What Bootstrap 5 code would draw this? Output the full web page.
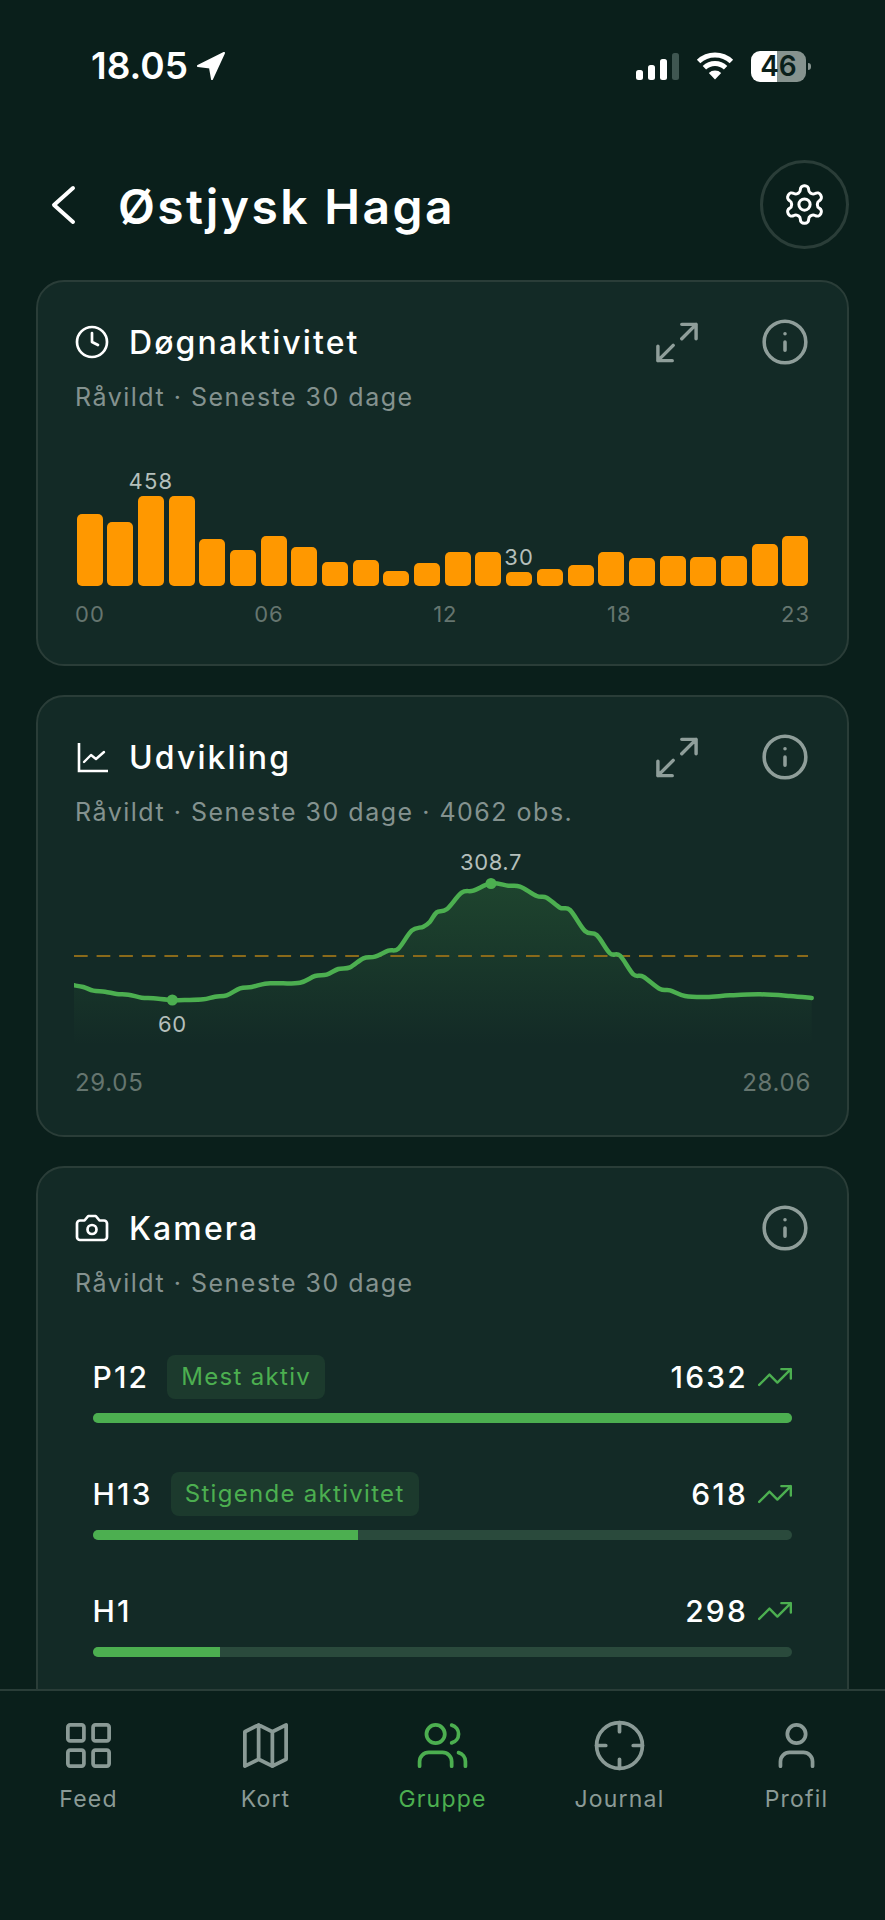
<!DOCTYPE html>
<html lang="da">

<head>
    <title>Østjysk Haga</title>
    <link href="https://cdn.jsdelivr.net/npm/bootstrap@5.3.0/dist/css/bootstrap.min.css" rel="stylesheet">
    <style>
        body {
            height: 1920px;
            overflow: hidden;
            background: #0a1f1b;
            color: #fff;
            font-family: "Inter", "Liberation Sans", sans-serif;
        }

        .status-bar {
            height: 132px;
            padding: 0 74px 0 91px;
        }

        .status-time {
            font-size: 37px;
            font-weight: 600;
        }

        .signal-bar {
            width: 7.5px;
            border-radius: 2.5px;
            background: #fff;
        }

        .battery-box {
            width: 55px;
            height: 31px;
            border-radius: 9px;
            background: linear-gradient(90deg, #fff 47%, #86938f 47%);
            color: #0a1f1b;
            font-size: 28px;
            font-weight: 600;
            line-height: 31px;
        }

        .battery-nub {
            width: 3px;
            height: 7px;
            margin-left: 2px;
            border-radius: 0 3px 3px 0;
            background: #86938f;
        }

        .page-head {
            height: 89px;
            margin-top: 28px;
            padding: 0 36px 0 50px;
        }

        .page-title {
            margin: 5px 0 0 42px;
            font-size: 48px;
            font-weight: 600;
            letter-spacing: 2.4px;
        }

        .round-btn {
            width: 89px;
            height: 89px;
            border: 3px solid #2a3d38;
            border-radius: 50%;
        }

        .page-main {
            height: 1689px;
            overflow: hidden;
        }

        .panel-card {
            margin: 31px 36px 0 36px;
            border: 2px solid #2a3d38;
            border-radius: 28px;
            background: #132a26;
            color: #fff;
        }

        .panel-card + .panel-card {
            margin-top: 29px;
        }

        .panel-body {
            padding: 35px 37px 36px 37px;
        }

        .panel-head {
            height: 50px;
        }

        .head-icon {
            margin-left: -1px;
            margin-right: 19px;
        }

        .panel-title {
            margin: 3px 0 0 0;
            font-size: 32px;
            font-weight: 500;
            letter-spacing: 2.1px;
        }

        .expand-icon {
            margin-right: 62px;
        }

        .panel-sub {
            margin-top: 14px;
            font-size: 25px;
            line-height: 32px;
            letter-spacing: 1.5px;
            color: #84928f;
        }

        .bars-wrap {
            height: 126px;
            margin-top: 47px;
            margin-left: 1.5px;
            gap: 4.67px;
            width: 732px;
        }

        .bar-col {
            flex: 1 1 0;
            min-width: 0;
        }

        .bar-fill {
            width: 100%;
            border-radius: 5px;
            background: #ff9800;
        }

        .bar-value {
            margin-bottom: 7px;
            font-size: 22px;
            line-height: 16px;
            letter-spacing: 1.2px;
            white-space: nowrap;
            color: #b4bfbb;
        }

        .axis-row {
            margin-top: 14px;
            font-size: 22px;
            line-height: 28px;
            letter-spacing: 1px;
            color: #65756f;
            width: 735px;
        }

        .line-wrap {
            display: block;
            margin: 12px 0 0 -1px;
        }

        .line-text {
            font-size: 22px;
            letter-spacing: 0.6px;
            fill: #b4bfbb;
            text-anchor: middle;
        }

        .date-row {
            margin-top: 8px;
            margin-right: -1px;
            margin-bottom: 1px;
            font-size: 24px;
            line-height: 30px;
            letter-spacing: 0.7px;
            color: #65756f;
        }

        .camera-list {
            margin: 56px 18px 0 17.5px;
            padding-bottom: 80px;
        }

        .camera-row {
            margin-bottom: 49px;
        }

        .camera-line {
            height: 44px;
        }

        .camera-name,
        .camera-count {
            font-size: 30px;
            font-weight: 500;
            letter-spacing: 2.2px;
        }

        .camera-tag {
            margin-left: 18px;
            padding: 0 14px;
            border-radius: 8px;
            background: #1c3a2d;
            color: #4caf50;
            font-size: 24px;
            line-height: 44px;
            letter-spacing: 1.3px;
        }

        .trend-icon {
            margin: 0 -2px 0 8px;
        }

        .camera-track {
            height: 10px;
            margin-top: 14px;
            border-radius: 5px;
            background: #2a4a3c;
        }

        .camera-track .progress-bar {
            background: #4caf50;
        }

        .tab-bar {
            height: 231px;
            border-top: 2px solid #2a3d38;
            padding-top: 26.5px;
            background: #0a1f1b;
        }

        .tab-item {
            flex: 1 1 0;
            color: #8a9a96;
        }

        .tab-item.on {
            color: #4caf50;
        }

        .tab-label {
            margin-top: 11.5px;
            font-size: 23px;
            line-height: 30px;
            letter-spacing: 1.2px;
        }
    </style>
</head>

<body>
    <div class="page-main">
        <!-- Status bar -->
        <div class="status-bar d-flex align-items-center justify-content-between">
            <div class="d-flex align-items-center gap-2">
                <span class="status-time">18.05</span>
                <svg width="30" height="30" viewBox="0 0 30 30">
                    <path d="M28 2 2 15l12 1.500L16 28z" fill="#fff" stroke="#fff" stroke-width="2" stroke-linejoin="round" />
                </svg>
            </div>
            <div class="d-flex align-items-center" style="gap:17px">
                <div class="d-flex align-items-end" style="gap:4.500px;height:27px">
                    <div class="signal-bar" style="height:10px"></div>
                    <div class="signal-bar" style="height:15px"></div>
                    <div class="signal-bar" style="height:21px"></div>
                    <div class="signal-bar" style="height:27px;background:#3f5651"></div>
                </div>
                <svg width="38" height="28" viewBox="0 0 38 28" fill="none" stroke="#fff" stroke-width="5">
                    <path d="M2.600 9.500a24 24 0 0 1 32.800 0" />
                    <path d="M8.400 15.700a15.500 15.500 0 0 1 21.200 0" />
                    <path d="M19 27.500 12.800 21a9 9 0 0 1 12.400 0z" fill="#fff" stroke="none" />
                </svg>
                <div class="d-flex align-items-center">
                    <div class="battery-box text-center">46</div>
                    <div class="battery-nub"></div>
                </div>
            </div>
        </div>

        <!-- Header -->
        <div class="page-head d-flex align-items-center">
            <svg width="26" height="40" viewBox="0 0 26 40" fill="none" stroke="#fff" stroke-width="4" stroke-linecap="round" stroke-linejoin="round">
                <path d="M23 3 4 20l19 17" />
            </svg>
            <h1 class="page-title flex-grow-1">Østjysk Haga</h1>
            <div class="round-btn d-flex align-items-center justify-content-center">
                <svg width="45" height="45" viewBox="0 0 24 24" fill="none" stroke="#fff" stroke-width="1.600" stroke-linecap="round" stroke-linejoin="round">
                    <path d="M12.220 2h-.44a2 2 0 0 0-2 2v.18a2 2 0 0 1-1 1.730l-.43.25a2 2 0 0 1-2 0l-.15-.08a2 2 0 0 0-2.730.73l-.22.38a2 2 0 0 0 .73 2.730l.15.1a2 2 0 0 1 1 1.720v.51a2 2 0 0 1-1 1.740l-.15.09a2 2 0 0 0-.73 2.730l.22.38a2 2 0 0 0 2.730.73l.15-.08a2 2 0 0 1 2 0l.43.25a2 2 0 0 1 1 1.730V20a2 2 0 0 0 2 2h.44a2 2 0 0 0 2-2v-.18a2 2 0 0 1 1-1.730l.43-.25a2 2 0 0 1 2 0l.15.08a2 2 0 0 0 2.730-.73l.22-.39a2 2 0 0 0-.73-2.730l-.15-.08a2 2 0 0 1-1-1.740v-.5a2 2 0 0 1 1-1.740l.15-.09a2 2 0 0 0 .73-2.730l-.22-.38a2 2 0 0 0-2.730-.73l-.15.08a2 2 0 0 1-2 0l-.43-.25a2 2 0 0 1-1-1.730V4a2 2 0 0 0-2-2z" />
                    <circle cx="12" cy="12" r="3" />
                </svg>
            </div>
        </div>

        <!-- Døgnaktivitet -->
        <div class="card panel-card">
            <div class="panel-body">
                <div class="panel-head d-flex align-items-center">
                    <svg class="head-icon" width="36" height="36" viewBox="0 0 24 24" fill="none" stroke="#fff" stroke-width="1.800" stroke-linecap="round" stroke-linejoin="round">
                        <circle cx="12" cy="12" r="10" />
                        <path d="M12 6v6l4 2" />
                    </svg>
                    <h2 class="panel-title flex-grow-1">Døgnaktivitet</h2>
                    <svg class="expand-icon" width="42" height="41" viewBox="0 0 44 42" fill="none" stroke="#8f9e9a" stroke-width="3.600" stroke-linecap="round" stroke-linejoin="round">
                        <path d="M27 2h15v15M42 2 27 17M2 25v15h15M2 40l16-16" />
                    </svg>
                    <svg width="50" height="50" viewBox="0 0 24 24" fill="none" stroke="#8f9e9a" stroke-width="1.700" stroke-linecap="round">
                        <circle cx="12" cy="12" r="10" />
                        <path d="M12 16v-4M12 8h.01" />
                    </svg>
                </div>
                <div class="panel-sub">Råvildt · Seneste 30 dage</div>
                <div class="bars-wrap d-flex align-items-end" id="barChart"></div>
                <div class="axis-row d-flex justify-content-between">
                    <span>00</span><span>06</span><span>12</span><span>18</span><span>23</span>
                </div>
            </div>
        </div>

        <!-- Udvikling -->
        <div class="card panel-card">
            <div class="panel-body">
                <div class="panel-head d-flex align-items-center">
                    <svg class="head-icon" width="36" height="36" viewBox="0 0 36 36" fill="none" stroke="#fff" stroke-width="2.600">
                        <path d="M5 4v28h29" />
                        <path d="m10 23 7-7 5 4 8-7" stroke-width="2.400" stroke-linecap="round" stroke-linejoin="round" />
                    </svg>
                    <h2 class="panel-title flex-grow-1">Udvikling</h2>
                    <svg class="expand-icon" width="42" height="41" viewBox="0 0 44 42" fill="none" stroke="#8f9e9a" stroke-width="3.600" stroke-linecap="round" stroke-linejoin="round">
                        <path d="M27 2h15v15M42 2 27 17M2 25v15h15M2 40l16-16" />
                    </svg>
                    <svg width="50" height="50" viewBox="0 0 24 24" fill="none" stroke="#8f9e9a" stroke-width="1.700" stroke-linecap="round">
                        <circle cx="12" cy="12" r="10" />
                        <path d="M12 16v-4M12 8h.01" />
                    </svg>
                </div>
                <div class="panel-sub">Råvildt · Seneste 30 dage · 4062 obs.</div>
                <svg class="line-wrap" width="740" height="220" viewBox="0 0 740 220">
                    <defs>
                        <linearGradient id="areaFade" x1="0" y1="40" x2="0" y2="205" gradientUnits="userSpaceOnUse">
                            <stop offset="0" stop-color="#4caf50" stop-opacity="0.2" />
                            <stop offset="1" stop-color="#4caf50" stop-opacity="0" />
                        </linearGradient>
                    </defs>
                    <path id="lineArea" fill="url(#areaFade)" />
                    <path d="M0 116H734" stroke="#8a6a1a" stroke-width="2" stroke-dasharray="13.700 8.900" />
                    <path id="lineStroke" fill="none" stroke="#4caf50" stroke-width="4.500" stroke-linecap="round" stroke-linejoin="round" />
                    <circle cx="98.300" cy="160" r="5.500" fill="#4caf50" />
                    <circle cx="417" cy="43.500" r="5.500" fill="#4caf50" />
                    <text class="line-text" x="417" y="30">308.7</text>
                    <text class="line-text" x="98.300" y="192">60</text>
                </svg>
                <div class="date-row d-flex justify-content-between">
                    <span>29.05</span><span>28.06</span>
                </div>
            </div>
        </div>

        <!-- Kamera -->
        <div class="card panel-card">
            <div class="panel-body">
                <div class="panel-head d-flex align-items-center">
                    <svg class="head-icon" width="36" height="36" viewBox="0 0 24 24" fill="none" stroke="#fff" stroke-width="1.800" stroke-linecap="round" stroke-linejoin="round">
                        <path d="M14.500 4h-5L7 7H4a2 2 0 0 0-2 2v9a2 2 0 0 0 2 2h16a2 2 0 0 0 2-2V9a2 2 0 0 0-2-2h-3l-2.500-3z" />
                        <circle cx="12" cy="13" r="3" />
                    </svg>
                    <h2 class="panel-title flex-grow-1">Kamera</h2>
                    <svg width="50" height="50" viewBox="0 0 24 24" fill="none" stroke="#8f9e9a" stroke-width="1.700" stroke-linecap="round">
                        <circle cx="12" cy="12" r="10" />
                        <path d="M12 16v-4M12 8h.01" />
                    </svg>
                </div>
                <div class="panel-sub">Råvildt · Seneste 30 dage</div>
                <div class="camera-list">
                    <div class="camera-row">
                        <div class="camera-line d-flex align-items-center">
                            <span class="camera-name">P12</span>
                            <span class="camera-tag">Mest aktiv</span>
                            <span class="camera-count ms-auto">1632</span>
                            <svg class="trend-icon" width="38" height="38" viewBox="0 0 24 24" fill="none" stroke="#4caf50" stroke-width="1.500" stroke-linecap="round" stroke-linejoin="round">
                                <path d="M22 7l-8.500 8.500-5-5L2 17M16 7h6v6" />
                            </svg>
                        </div>
                        <div class="progress camera-track">
                            <div class="progress-bar" style="width:100%"></div>
                        </div>
                    </div>
                    <div class="camera-row">
                        <div class="camera-line d-flex align-items-center">
                            <span class="camera-name">H13</span>
                            <span class="camera-tag">Stigende aktivitet</span>
                            <span class="camera-count ms-auto">618</span>
                            <svg class="trend-icon" width="38" height="38" viewBox="0 0 24 24" fill="none" stroke="#4caf50" stroke-width="1.500" stroke-linecap="round" stroke-linejoin="round">
                                <path d="M22 7l-8.500 8.500-5-5L2 17M16 7h6v6" />
                            </svg>
                        </div>
                        <div class="progress camera-track">
                            <div class="progress-bar" style="width:37.900%"></div>
                        </div>
                    </div>
                    <div class="camera-row">
                        <div class="camera-line d-flex align-items-center">
                            <span class="camera-name">H1</span>
                            <span class="camera-count ms-auto">298</span>
                            <svg class="trend-icon" width="38" height="38" viewBox="0 0 24 24" fill="none" stroke="#4caf50" stroke-width="1.500" stroke-linecap="round" stroke-linejoin="round">
                                <path d="M22 7l-8.500 8.500-5-5L2 17M16 7h6v6" />
                            </svg>
                        </div>
                        <div class="progress camera-track">
                            <div class="progress-bar" style="width:18.260%"></div>
                        </div>
                    </div>
                </div>
            </div>
        </div>
    </div>

    <!-- Tab bar -->
    <nav class="tab-bar d-flex">
        <div class="tab-item d-flex flex-column align-items-center">
            <svg width="55" height="55" viewBox="0 0 24 24" fill="none" stroke="currentColor" stroke-width="1.630" stroke-linecap="round" stroke-linejoin="round">
                <rect x="3" y="3" width="7" height="7" rx="1" />
                <rect x="14" y="3" width="7" height="7" rx="1" />
                <rect x="14" y="14" width="7" height="7" rx="1" />
                <rect x="3" y="14" width="7" height="7" rx="1" />
            </svg>
            <span class="tab-label">Feed</span>
        </div>
        <div class="tab-item d-flex flex-column align-items-center">
            <svg width="55" height="55" viewBox="0 0 24 24" fill="none" stroke="currentColor" stroke-width="1.630" stroke-linecap="round" stroke-linejoin="round">
                <path d="M3 6l6-3 6 3 6-3v15l-6 3-6-3-6 3zM9 3v15M15 6v15" />
            </svg>
            <span class="tab-label">Kort</span>
        </div>
        <div class="tab-item on d-flex flex-column align-items-center">
            <svg width="55" height="55" viewBox="0 0 24 24" fill="none" stroke="currentColor" stroke-width="1.630" stroke-linecap="round" stroke-linejoin="round">
                <path d="M16 21v-2a4 4 0 0 0-4-4H6a4 4 0 0 0-4 4v2" />
                <circle cx="9" cy="7" r="4" />
                <path d="M22 21v-2a4 4 0 0 0-3-3.870M16 3.130a4 4 0 0 1 0 7.750" />
            </svg>
            <span class="tab-label">Gruppe</span>
        </div>
        <div class="tab-item d-flex flex-column align-items-center">
            <svg width="55" height="55" viewBox="0 0 24 24" fill="none" stroke="currentColor" stroke-width="1.630" stroke-linecap="round" stroke-linejoin="round">
                <circle cx="12" cy="12" r="10" />
                <path d="M22 12h-4M6 12H2M12 6V2M12 22v-4" />
            </svg>
            <span class="tab-label">Journal</span>
        </div>
        <div class="tab-item d-flex flex-column align-items-center">
            <svg width="55" height="55" viewBox="0 0 24 24" fill="none" stroke="currentColor" stroke-width="1.630" stroke-linecap="round" stroke-linejoin="round">
                <path d="M19 21v-2a4 4 0 0 0-4-4H9a4 4 0 0 0-4 4v2" />
                <circle cx="12" cy="7" r="4" />
            </svg>
            <span class="tab-label">Profil</span>
        </div>
    </nav>

    <script src="https://cdn.jsdelivr.net/npm/bootstrap@5.3.0/dist/js/bootstrap.bundle.min.js"></script>
    <script>
        // Bar heights in px, per hour 00-23
        const hours = [71.7, 64.3, 90.3, 89.7, 47, 35.7, 50.3, 39, 23.7, 25.7, 15, 23, 34.3, 34.3, 14.3, 17, 21, 33.7, 27.7, 30, 28.7, 30.3, 41.7, 50.3];
        const barLabels = { 2: '458', 14: '30' };
        const barChart = document.getElementById('barChart');
        hours.forEach((h, i) => {
            const col = document.createElement('div');
            col.className = 'bar-col d-flex flex-column align-items-center';
            if (barLabels[i]) {
                const label = document.createElement('div');
                label.className = 'bar-value';
                label.textContent = barLabels[i];
                col.appendChild(label);
            }
            const bar = document.createElement('div');
            bar.className = 'bar-fill';
            bar.style.height = h + 'px';
            col.appendChild(bar);
            barChart.appendChild(col);
        });

        // Line points read off as [x, y] inside the 740x220 svg
        const left = [[42, 436], [70, 441], [100, 452], [135, 455], [170, 462], [205, 464], [245, 473], [280, 475], [337, 480], [380, 480], [430, 478], [465, 470], [500, 466], [540, 445], [575, 441], [615, 431], [650, 430], [720, 428], [765, 408], [800, 404], [835, 387], [870, 382], [910, 355], [945, 350], [985, 332], [1015, 326], [1055, 272], [1090, 260]];
        const right = [[0, 245], [20, 217], [50, 208], [95, 158], [130, 152], [183, 130], [235, 137], [270, 140], [320, 168], [350, 173], [390, 203], [420, 210], [465, 273], [500, 285], [540, 340], [570, 347], [610, 403], [640, 410], [690, 447], [720, 451], [765, 468], [830, 471], [900, 466], [990, 463], [1080, 468], [1145, 474]];
        const pts = left.map(p => [p[0] / 3 - 14, p[1] / 3]).concat(right.map(p => [p[0] / 3 + 356, p[1] / 3]));

        // Catmull-Rom through the points
        let d = `M${pts[0][0]} ${pts[0][1]}`;
        for (let i = 0; i < pts.length - 1; i++) {
            const p0 = pts[i - 1] || pts[i], p1 = pts[i], p2 = pts[i + 1], p3 = pts[i + 2] || p2;
            const c1x = p1[0] + (p2[0] - p0[0]) / 6, c1y = p1[1] + (p2[1] - p0[1]) / 6;
            const c2x = p2[0] - (p3[0] - p1[0]) / 6, c2y = p2[1] - (p3[1] - p1[1]) / 6;
            d += `C${c1x} ${c1y} ${c2x} ${c2y} ${p2[0]} ${p2[1]}`;
        }
        document.getElementById('lineStroke').setAttribute('d', d);
        document.getElementById('lineArea').setAttribute('d', `${d}L${pts[pts.length - 1][0]} 205L${pts[0][0]} 205Z`);
    </script>
</body>

</html>
